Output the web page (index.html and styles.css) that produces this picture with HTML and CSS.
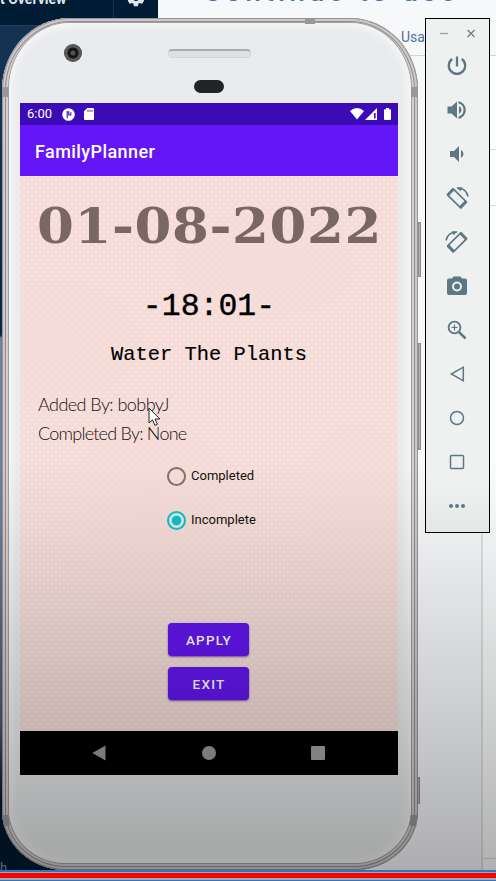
FILE: index.html
```html
<!DOCTYPE html>
<html lang="en">
<head>
<meta charset="utf-8">
<title>FamilyPlanner</title>
<link rel="stylesheet" href="styles.css">
</head>
<body>
<div class="desktop">
  <div class="backdrop">
    <aside class="side">
      <header class="side-head">
        <span class="side-title">t Overview</span>
        <span class="side-gear"><svg width="20" height="20" viewBox="0 0 24 24"><path fill="#dfe5ea" d="M19.4 13c0-.3.1-.6.1-1s0-.7-.1-1l2.1-1.600c.2-.2.2-.4.100-.6l-2-3.500c-.1-.2-.4-.3-.6-.2l-2.500 1c-.5-.4-1.100-.7-1.700-1l-.4-2.600c0-.2-.2-.4-.5-.4h-4c-.2 0-.4.200-.5.4l-.4 2.600c-.6.300-1.100.600-1.700 1l-2.500-1c-.2-.1-.5 0-.6.200l-2 3.500c-.1.200-.1.400.1.600l2.100 1.600c0 .3-.1.600-.1 1s0 .7.100 1l-2.100 1.600c-.2.200-.2.400-.1.600l2 3.500c.1.200.4.300.6.200l2.500-1c.5.400 1.100.700 1.700 1l.4 2.600c0 .2.200.4.500.4h4c.2 0 .4-.2.500-.4l.4-2.600c.6-.3 1.100-.6 1.700-1l2.500 1c.2.100.5 0 .6-.2l2-3.500c.1-.2.100-.4-.1-.6zM12 15.500a3.500 3.500 0 1 1 0-7 3.500 3.500 0 0 1 0 7z"/></svg></span>
      </header>
      <span class="side-foot">h</span>
    </aside>
    <main class="pane">
      <div class="pane-title">Continue to use</div>
      <div class="pane-tabs">Usage</div>
      <div class="pane-body"><div class="pane-left"></div><div class="pane-right"><i></i><i></i><i></i></div></div>
    </main>
  </div>

  <section class="phone">
    <i class="key key-power"></i><i class="key key-volume"></i><i class="key key-low"></i>
    <i class="band band-top"></i><i class="band band-tl"></i><i class="band band-tr"></i><i class="band band-bl"></i><i class="band band-br"></i>
    <div class="face">
      <div class="bezel">
        <i class="camera"></i><i class="speaker"></i><i class="sensor"></i>
      </div>
      <div class="screen">
        <div class="status">
          <span class="clock">6:00</span>
          <svg class="s-app" width="13" height="13" viewBox="0 0 13 13"><circle cx="6.500" cy="6.500" r="6.300" fill="#fff"/><path d="M5.200 3.300v7M5 3.800h1.800V7h2V4.200" fill="none" stroke="#3b0cb5" stroke-width="1.100"/></svg>
          <svg class="s-sd" width="10" height="12" viewBox="0 0 10 12"><path fill="#fff" d="M3.300 0H9q1 0 1 1v10q0 1-1 1H1q-1 0-1-1V3.300z"/><path d="M4 1.800v2M6 1.800v2M8 1.800v2" stroke="#3b0cb5" stroke-width=".9"/></svg>
          <svg class="s-net" width="42" height="12" viewBox="0 0 42 12"><path fill="#fff" d="M0 3Q7-2.800 14 3L7 11.500z"/><path fill="#fff" d="M27 0v12H15z"/><path fill="#3b0cb5" d="M24 5h1.600v5.500H24z"/><path fill="#fff" d="M35 1.300h1V0h3v1.300h1q1 0 1 1V11q0 1-1 1h-5q-1 0-1-1V2.300q0-1 1-1z"/></svg>
        </div>
        <div class="appbar">FamilyPlanner</div>
        <div class="content">
          <div class="date">01-08-2022</div>
          <div class="time">-18:01-</div>
          <div class="task">Water The Plants</div>
          <div class="note note-a">Added By: bobbyJ</div>
          <div class="note note-b">Completed By: None</div>
          <div class="choices">
            <div class="choice"><i class="radio"></i><span>Completed</span></div>
            <div class="choice"><i class="radio on"></i><span>Incomplete</span></div>
          </div>
          <div class="actions">
            <div class="btn">APPLY</div>
            <div class="btn">EXIT</div>
          </div>
        </div>
        <div class="nav">
          <svg width="14" height="16" viewBox="0 0 14 16"><path fill="#9a9a9a" d="M13.500.5v15L.3 8z"/></svg>
          <i class="nav-home"></i>
          <i class="nav-recent"></i>
        </div>
      </div>
    </div>
  </section>

  <svg class="cursor" width="13" height="20" viewBox="0 0 13 20"><path d="M1 1v15l3.500-3.200 2.400 5.600 2.500-1.100L7 12h4.800z" fill="#fff" stroke="#222" stroke-width="1"/></svg>
  <div class="shade"></div>

  <section class="tools">
    <div class="win">
      <svg width="36" height="9" viewBox="0 0 36 9"><path d="M0 4.500h8" stroke="#9aa1a4" stroke-width="1.300"/><path d="M27.500 1l7 7M34.500 1l-7 7" stroke="#737d82" stroke-width="1.300"/></svg>
    </div>
    <svg viewBox="0 0 24 24"><path d="M12 2.500v10M7.200 5a8.200 8.200 0 1 0 9.600 0" fill="none" stroke="#5c7885" stroke-width="2.300"/></svg>
    <svg viewBox="0 0 24 24"><path fill="#5c7885" d="M2.500 8.500v7h4l5.500 5v-17l-5.500 5zM16.500 12A4.500 4.500 0 0 0 14 8v8a4.500 4.500 0 0 0 2.500-4zM13.500 3v2.600a6.600 6.600 0 0 1 0 12.800V21a9.200 9.200 0 0 0 0-18z"/></svg>
    <svg viewBox="0 0 24 24"><path fill="#5c7885" d="M5 9v6h4l5 5V4L9 9zm13.500 3A4.500 4.500 0 0 0 16 8v8a4.500 4.500 0 0 0 2.500-4z"/></svg>
    <svg viewBox="0 0 24 24"><g fill="none" stroke="#5c7885"><path d="M8.500 3.200 21 15.500l-5.700 6L2.800 9.200z" stroke-width="1.700"/><path d="M8.800 2.800 2.500 9.300M21.300 15.400l-6.300 6.500" stroke-width="3"/><path d="M12 2.200q9-.7 11 8.300" stroke-width="1.500"/></g><path fill="#5c7885" d="m11.500 1.500 6-.2-2 4z"/></svg>
    <svg viewBox="0 0 24 24"><g fill="none" stroke="#5c7885"><path d="M15.500 3.200 3 15.500l5.700 6L21.200 9.200z" stroke-width="1.700"/><path d="m15.200 2.800 6.300 6.500M2.700 15.400 9 21.900" stroke-width="3"/><path d="M12 2.200Q3 1.500 1 10.500" stroke-width="1.500"/></g><path fill="#5c7885" d="m12.500 1.500-6-.2 2 4z"/></svg>
    <svg viewBox="0 0 24 24"><path fill="#5c7885" d="M8.500 2.500 7 4.500H4q-2 0-2 2V19q0 2 2 2h16q2 0 2-2V6.500q0-2-2-2h-3l-1.500-2z"/><circle cx="12" cy="12.500" r="4" fill="none" stroke="#eee" stroke-width="2"/></svg>
    <svg viewBox="0 0 24 24"><g fill="none" stroke="#5c7885"><circle cx="9.500" cy="9.500" r="5.900" stroke-width="1.900"/><path d="m14 14 6.500 6.500" stroke-width="2.500"/><path d="M6.500 9.500h6M9.500 6.500v6" stroke-width="1.200"/></g></svg>
    <svg viewBox="0 0 24 24"><path d="M18.300 5.200v13.600L6.300 12z" fill="none" stroke="#5c7885" stroke-width="1.500"/></svg>
    <svg viewBox="0 0 24 24"><circle cx="12" cy="12" r="6.500" fill="none" stroke="#5c7885" stroke-width="1.500"/></svg>
    <svg viewBox="0 0 24 24"><rect x="5.500" y="5.500" width="13" height="13" rx="1" fill="none" stroke="#5c7885" stroke-width="1.500"/></svg>
    <svg viewBox="0 0 24 24"><g fill="#5c7885"><circle cx="6" cy="12" r="2"/><circle cx="12" cy="12" r="2"/><circle cx="18" cy="12" r="2"/></g></svg>
  </section>
  <div class="progress"></div>
</div>
</body>
</html>
```
FILE: styles.css
```css
* { box-sizing: border-box; }
body { margin: 0; font-family: Roboto, sans-serif; }
i { display: block; }
svg { display: block; flex: none; }
.desktop { position: relative; width: 496px; height: 881px; overflow: hidden; }

.backdrop { display: grid; grid-template-columns: 158px 1fr; height: 881px; }
.side {
  display: flex; flex-direction: column; justify-content: space-between;
  background: linear-gradient(#133150 0, #153352 110px, #0d2744 280px, #0b2542 335px, #71839a 338px, #6a7e98 520px, #4c5968 720px, #011a30 800px);
}
.side-head { display: flex; height: 26px; background: #011d36; border-bottom: 1px solid #234059; color: #dfe5ea; }
.side-title { width: 114px; margin-top: -9px; font-size: 14px; line-height: 16px; font-weight: 700; white-space: nowrap; border-right: 1px solid #18344d; height: 35px; }
.side-gear { margin: -12px 0 0 12px; }
.side-foot { color: #8994a0; font-size: 13px; line-height: 15px; margin-bottom: 6px; }
.pane { display: flex; flex-direction: column; background: #f7f8fa; overflow: hidden; }
.pane-title { height: 24px; padding-left: 45px; color: #4777a0; font-size: 28px; line-height: 28px; margin-top: -22px; letter-spacing: 4px; font-weight: 500; white-space: nowrap; }
.pane-tabs { height: 54px; padding: 27px 0 0 243px; border-bottom: 1px solid #cfd4dc; color: #54709c; font-size: 14px; line-height: 17px; }
.pane-body { display: flex; flex: 1; }
.pane-left { width: 325px; border-right: 2px solid #dfe0e2; }
.pane-right { flex: 1; display: grid; grid-template-rows: 94px 56px 653px 1fr; background: #fbfcfd; }
.pane-right i { border-bottom: 1px solid #d9dbdd; }

.phone {
  position: absolute; left: 2px; top: 18px; width: 416px; height: 852px; padding: 5px 7px 7px;
  border-radius: 68px 68px 64px 64px / 72px 72px 60px 60px; background: #cbc3c5;
  box-shadow: inset 0 0 0 1px #999397, inset 0 0 0 3px #cfc8ca, inset 0 0 0 4px #938e92, inset 0 0 0 6px #d5cdcf;
}
.face { height: 840px; padding: 0 11px; border-radius: 61px 61px 57px 57px / 66px 66px 54px 54px; background: #e9ebec; box-shadow: 0 0 0 1px #a09da1, inset 0 0 7px 4px #f5f6f7; overflow: hidden; }
.key { position: absolute; width: 3px; background: #b8aeb3; border: 1px solid #92898f; }
.key-power { left: 416px; top: 204px; height: 55px; }
.key-volume { left: 416px; top: 325px; height: 107px; }
.key-low { left: 415px; top: 759px; height: 27px; }
.band { position: absolute; background: #99979a; }
.band-top { left: 303px; top: 1px; width: 10px; height: 5px; }
.band-tl { left: 0; top: 69px; width: 6px; height: 10px; }
.band-tr { right: 0; top: 69px; width: 7px; height: 10px; }
.band-bl { left: 1px; top: 797px; width: 6px; height: 11px; transform: rotate(-8deg); }
.band-br { right: 1px; top: 797px; width: 7px; height: 11px; transform: rotate(8deg); }
.bezel { height: 80px; display: grid; grid-template-columns: 148px 83px 1fr; grid-template-rows: 57px 1fr; padding-top: 0; }
.camera { width: 18px; height: 18px; margin: 21px 0 0 44px; border-radius: 50%; background: radial-gradient(circle, #535353 0 2px, #151515 3px 5px, #58595b 6px 8px, #3a3a3c 9px); }
.speaker { height: 9px; margin-top: 26px; border: 1px solid #d6d7d9; border-top: 2px solid #a9abad; border-radius: 4px; background: #dfe0e1; }
.sensor { grid-column: 2; width: 30px; height: 13px; margin: 0 0 0 26px; border-radius: 7px; background: #202426; }

.screen { width: 378px; height: 672px; display: flex; flex-direction: column; }
.status { height: 22px; background: #3b0cb5; color: #fff; display: flex; align-items: center; padding: 0 7px; }
.clock { width: 35px; font-size: 13px; line-height: 22px; }
.s-sd { margin-left: 9px; }
.s-net { margin-left: auto; margin-right: -1px; }
.appbar { height: 51px; padding-left: 15px; background: #6416f6; color: #fff; font-size: 18px; line-height: 53px; font-weight: 500; letter-spacing: .42px; }
.content {
  height: 555px; display: flex; flex-direction: column; color: #17100f;
  background-color: #f5dcd8;
  background-image: radial-gradient(ellipse 110px 120px at 35% 60%, #f5dcd8, transparent), radial-gradient(ellipse 120px 70px at 65% 16%, #f5dcd8, transparent), radial-gradient(ellipse 130px 90px at 8% 30%, #f5dcd8cc, transparent), radial-gradient(ellipse 90px 120px at 90% 60%, #f5dcd8cc, transparent), radial-gradient(circle, #fbeae5 0 .6px, transparent 1.2px), radial-gradient(circle, #fbeae5 0 .6px, transparent 1.2px);
  background-size: auto, auto, auto, auto, 8px 8px, 8px 8px;
  background-position: 0 0, 0 0, 0 0, 0 0, 0 0, 4px 4px;
}
.date { height: 60px; margin: 19px 0 0 17px; color: #7a6663; font: 700 53px/62px "DejaVu Serif", serif; letter-spacing: .6px; white-space: nowrap; transform: scaleY(.92); }
.time { height: 40px; margin-top: 32px; text-align: center; color: #000; font: 31.5px/40px "Liberation Mono", monospace; -webkit-text-stroke: .4px #000; }
.task { height: 28px; margin-top: 14px; text-align: center; color: #000; font: 20.4px/28px "Liberation Mono", monospace; -webkit-text-stroke: .15px #000; }
.note { height: 29px; padding-left: 18px; font: 300 18px/29px Lato, sans-serif; letter-spacing: -.76px; white-space: nowrap; }
.note-a { margin-top: 21px; letter-spacing: -.55px; }
.choices { padding: 6px 0 0 147px; }
.choice { height: 44px; display: flex; align-items: center; gap: 5px; font-size: 13px; line-height: 18px; }
.radio { width: 19px; height: 19px; border: 2px solid #82706d; border-radius: 50%; }
.radio.on { border-color: #17bfc5; background: radial-gradient(circle, #17bfc5 0 4.500px, #d3eef0 5.200px); }
.actions { display: grid; gap: 11px; padding: 81px 0 0 148px; }
.btn { width: 81px; height: 33px; border-radius: 4px; background: #6216ee; color: #fff; font-size: 13.5px; line-height: 34px; font-weight: 500; letter-spacing: 1.2px; padding-left: 1px; text-align: center; box-shadow: 0 1px 2px #7d55b0; }
.nav { height: 44px; background: #000; display: flex; align-items: center; justify-content: space-between; padding: 0 73px 0 72px; }
.nav-home { width: 14px; height: 14px; border-radius: 50%; background: #9a9a9a; }
.nav-recent { width: 14px; height: 14px; border-radius: 1px; background: #a3a3a3; }

.cursor { position: absolute; left: 148px; top: 407px; }
.shade { position: absolute; left: 0; right: 0; top: 460px; bottom: 0; background: linear-gradient(transparent, rgba(0,0,0,.05) 20%, rgba(0,0,0,.19) 65%, rgba(0,0,0,.31)); }
.tools { position: absolute; left: 425px; top: 18px; width: 65px; height: 515px; padding-right: 1px; border: 1.5px solid #000; background: linear-gradient(#eff0f0 90%, #e5e6e6); display: flex; flex-direction: column; align-items: center; gap: 20px; }
.tools > svg { width: 24px; height: 24px; }
.win { height: 15px; padding: 10px 0 0 1px; }
.progress { position: absolute; left: 0; right: 0; bottom: 0; height: 11px; background: linear-gradient(#267ac0 0 2px, #9dabb3 2px 3px, #f00 3px 8px, #9dabb3 8px 10px, #267ac0 10px); }
```
